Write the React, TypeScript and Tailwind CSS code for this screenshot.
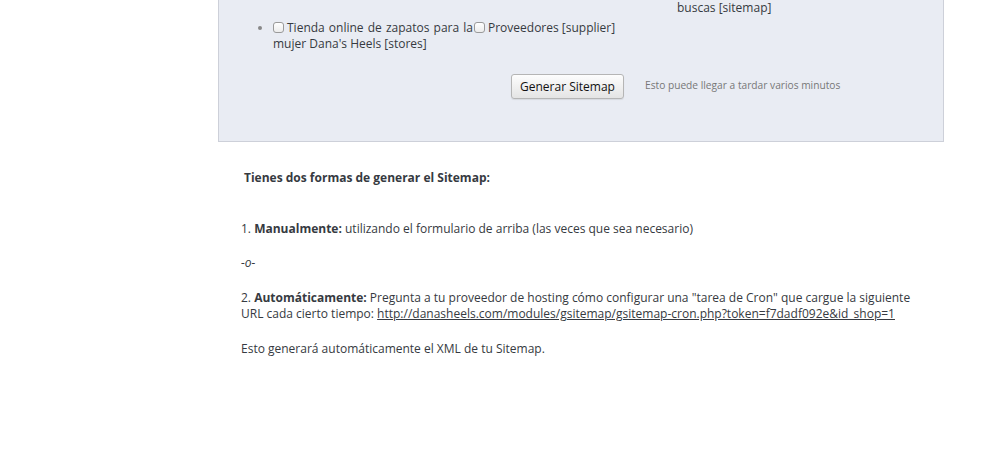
export default function App() {
  return (
    <div className="min-h-screen bg-white font-['Open_Sans',sans-serif] text-[12px] text-[#363a41]">
      <div className="ml-[218px] w-[726px] border-x border-b border-[#cdd0d9] bg-[#e9ecf3] pb-[42px]">
        <div className="grid grid-cols-[202px_202px_202px] pl-[54px] leading-[16px]">
          <div />
          <div />
          <div>buscas [sitemap]</div>
        </div>
        <ul className="mt-[4px] list-disc pl-[54px] leading-[16px] marker:text-[#888]">
          <li>
            <div className="grid grid-cols-[200px_202px_202px] gap-x-[1px]">
              <label className="text-justify">
                <input type="checkbox" className="mr-[3px] h-[11px] w-[11px] appearance-none rounded-[3px] border border-[#9a9a9a] bg-gradient-to-b from-white to-[#ececec] align-[-1px]" />
                Tienda online de zapatos para la mujer Dana's Heels [stores]
              </label>
              <label>
                <input type="checkbox" className="mr-[3px] h-[11px] w-[11px] appearance-none rounded-[3px] border border-[#9a9a9a] bg-gradient-to-b from-white to-[#ececec] align-[-1px]" />
                Proveedores [supplier]
              </label>
            </div>
          </li>
        </ul>
        <div className="mt-[22px] flex items-center pl-[292px]">
          <button className="h-[25px] w-[113px] rounded-[3px] border border-[#b5b5b5] bg-gradient-to-b from-[#fdfdfd] to-[#e4e4e4] text-[12px] text-[#111] shadow-[0_1px_1px_rgba(0,0,0,0.08)]">
            Generar Sitemap
          </button>
          <span className="ml-[21px] -mt-[2px] text-[10.2px] text-[#777]">Esto puede llegar a tardar varios minutos</span>
        </div>
      </div>
      <div className="ml-[241px] w-[680px] leading-[16px]">
        <p className="ml-[3px] mt-[28px] font-bold">Tienes dos formas de generar el Sitemap:</p>
        <p className="mt-[35px]">
          1. <b>Manualmente:</b> utilizando el formulario de arriba (las veces que sea necesario)
        </p>
        <p className="mt-[18px] italic">-o-</p>
        <p className="mt-[19px]">
          2. <b>Automáticamente:</b> Pregunta a tu proveedor de hosting cómo configurar una "tarea de Cron" que cargue la siguiente URL cada cierto tiempo:{" "}
          <a className="underline" href="#">
            http://danasheels.com/modules/gsitemap/gsitemap-cron.php?token=f7dadf092e&amp;id_shop=1
          </a>
        </p>
        <p className="mt-[19px]">Esto generará automáticamente el XML de tu Sitemap.</p>
      </div>
    </div>
  );
}
